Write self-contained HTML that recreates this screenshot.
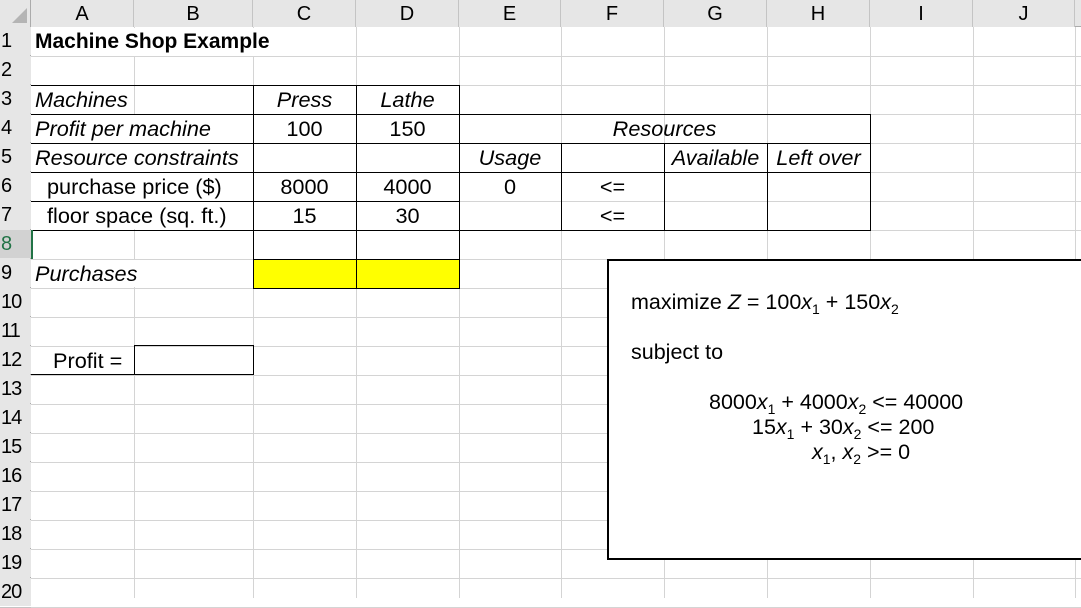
<!DOCTYPE html>
<html><head><meta charset="utf-8"><style>
*{margin:0;padding:0;box-sizing:border-box}
body{width:1081px;height:598px;overflow:hidden;background:#fff;position:relative;font-family:"Liberation Sans",Arial,sans-serif;color:#000}
.a{position:absolute}
.h{position:absolute;height:1px}
.v{position:absolute;width:1px}
.g{background:#d4d4d4}
.k{background:#000}
.t{position:absolute;font-size:21.7px;line-height:29px;white-space:nowrap}
.c{text-align:center}
.i{font-style:italic}
.rn{position:absolute;left:0;width:31px;font-size:20px;line-height:29px;padding-left:1px;background:#e6e6e6;overflow:hidden;letter-spacing:-1px}
.ch{position:absolute;top:0;height:27px;font-size:20px;line-height:28px;text-align:center;background:#e6e6e6;border-right:1px solid #c4c4c4}
.bx{font-size:21.5px;position:absolute;white-space:nowrap}
sub{font-size:14px;vertical-align:-5px;line-height:0}
</style></head><body>
<div class="a" style="left:0;top:0;width:1081px;height:27px;background:#e6e6e6;border-bottom:1px solid #ababab"></div>
<div class="a" style="left:0;top:0;width:31px;height:598px;background:#e6e6e6;border-right:1px solid #ababab"></div>
<svg class="a" style="left:8px;top:6px" width="20" height="18"><polygon points="19,2 19,17 4,17" fill="#b4b4b4"/></svg>
<div class="ch" style="left:31px;width:103px">A</div>
<div class="ch" style="left:134px;width:119px">B</div>
<div class="ch" style="left:253px;width:103px">C</div>
<div class="ch" style="left:356px;width:103px">D</div>
<div class="ch" style="left:459px;width:102px">E</div>
<div class="ch" style="left:561px;width:103px">F</div>
<div class="ch" style="left:664px;width:103px">G</div>
<div class="ch" style="left:767px;width:103px">H</div>
<div class="ch" style="left:870px;width:103px">I</div>
<div class="ch" style="left:973px;width:102px">J</div>
<div id="grid"></div>
<script>
var s='';
var xs=[134,253,356,459,561,664,767,870,973,1075];
for(var x of xs) s+='<div class="v g" style="left:'+x+'px;top:27px;height:571px"></div>';
for(var r=1;r<=20;r++){var y=27+29*r;s+='<div class="h g" style="left:31px;top:'+y+'px;width:1050px"></div>';
s+='<div class="rn" style="top:'+(27+29*(r-1))+'px;height:28px;'+(r==8?'color:#217346;background:#d2d2d2':'')+'">'+r+'</div>';
s+='<div class="h" style="left:0;top:'+y+'px;width:31px;background:#c4c4c4"></div>';}
document.getElementById('grid').innerHTML=s;
</script>
<div class="a" style="left:133px;top:28px;width:3px;height:28px;background:#fff"></div>
<div class="a" style="left:252px;top:28px;width:3px;height:28px;background:#fff"></div>
<div class="a" style="left:133px;top:115px;width:3px;height:114px;background:#fff"></div>
<div class="a" style="left:133px;top:260px;width:3px;height:27px;background:#fff"></div>
<div class="h k" style="left:31px;top:85px;width:428px"></div>
<div class="h k" style="left:31px;top:114px;width:840px"></div>
<div class="h k" style="left:31px;top:143px;width:840px"></div>
<div class="h k" style="left:31px;top:172px;width:840px"></div>
<div class="h k" style="left:31px;top:201px;width:428px"></div>
<div class="h k" style="left:31px;top:230px;width:840px"></div>
<div class="h k" style="left:253px;top:259px;width:206px"></div>
<div class="a" style="left:253px;top:259px;width:207px;height:30px;background:#ff0;border:1px solid #000"></div>
<div class="v k" style="left:356px;top:259px;height:29px"></div>
<div class="v k" style="left:253px;top:85px;height:174px"></div>
<div class="v k" style="left:356px;top:85px;height:174px"></div>
<div class="v k" style="left:459px;top:85px;height:174px"></div>
<div class="v k" style="left:561px;top:143px;height:87px"></div>
<div class="v k" style="left:664px;top:143px;height:87px"></div>
<div class="v k" style="left:767px;top:143px;height:87px"></div>
<div class="v k" style="left:870px;top:114px;height:117px"></div>
<div class="a" style="left:31px;top:230px;width:2px;height:29px;background:#217346"></div>
<div class="h k" style="left:134px;top:345px;width:119px"></div>
<div class="h k" style="left:31px;top:374px;width:222px"></div>
<div class="v k" style="left:134px;top:345px;height:30px"></div>
<div class="v k" style="left:253px;top:345px;height:30px"></div>
<div class="t" style="left:35px;top:27px;font-weight:bold;font-size:21px">Machine Shop Example</div>
<div class="t i" style="left:35px;top:85px">Machines</div>
<div class="t i c" style="left:253px;top:85px;width:103px">Press</div>
<div class="t i c" style="left:356px;top:85px;width:103px">Lathe</div>
<div class="t i" style="left:35px;top:114px">Profit per machine</div>
<div class="t c" style="left:253px;top:114px;width:103px">100</div>
<div class="t c" style="left:356px;top:114px;width:103px">150</div>
<div class="t i c" style="left:459px;top:114px;width:411px">Resources</div>
<div class="t i" style="left:35px;top:143px">Resource constraints</div>
<div class="t i c" style="left:459px;top:143px;width:102px">Usage</div>
<div class="t i c" style="left:664px;top:143px;width:103px">Available</div>
<div class="t i c" style="left:767px;top:143px;width:103px">Left over</div>
<div class="t" style="left:47px;top:172px">purchase price ($)</div>
<div class="t c" style="left:253px;top:172px;width:103px">8000</div>
<div class="t c" style="left:356px;top:172px;width:103px">4000</div>
<div class="t c" style="left:459px;top:172px;width:102px">0</div>
<div class="t c" style="left:561px;top:172px;width:103px">&lt;=</div>
<div class="t" style="left:47px;top:201px">floor space (sq. ft.)</div>
<div class="t c" style="left:253px;top:201px;width:103px">15</div>
<div class="t c" style="left:356px;top:201px;width:103px">30</div>
<div class="t c" style="left:561px;top:201px;width:103px">&lt;=</div>
<div class="t i" style="left:35px;top:259px">Purchases</div>
<div class="t" style="left:53px;top:346px">Profit =</div>
<div class="a" style="left:607px;top:259px;width:480px;height:301px;background:#fff;border:2px solid #000"></div>
<div class="bx" style="left:631px;top:290px">maximize <i>Z</i> = 100<i>x</i><sub>1</sub> + 150<i>x</i><sub>2</sub></div>
<div class="bx" style="left:631px;top:340px">subject to</div>
<div class="bx" style="left:709px;top:390px">8000<i>x</i><sub>1</sub> + 4000<i>x</i><sub>2</sub> &lt;= 40000</div>
<div class="bx" style="left:752px;top:415px">15<i>x</i><sub>1</sub> + 30<i>x</i><sub>2</sub> &lt;= 200</div>
<div class="bx" style="left:812px;top:440px"><i>x</i><sub>1</sub>, <i>x</i><sub>2</sub> &gt;= 0</div>
</body></html>
